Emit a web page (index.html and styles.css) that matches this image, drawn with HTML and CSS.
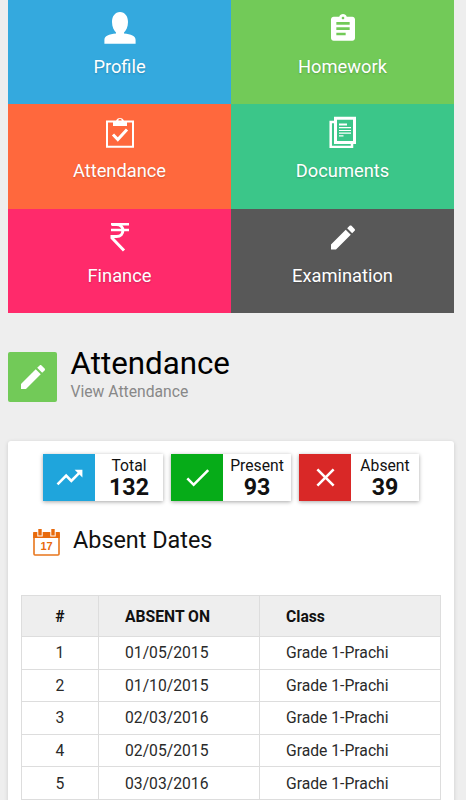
FILE: index.html
```html
<!DOCTYPE html>
<html lang="en">
<head>
  <meta charset="UTF-8">
  <title>Attendance</title>
  <link rel="stylesheet" href="styles.css">
</head>
<body>
<div class="menu">
  <div class="tile profile">
    <svg width="32" height="32" viewBox="0 0 32 32" fill="#fff"><path d="M16 0C11 0 8 4.400 8 10c0 5 2 8.500 4 10.500v1C5 22 .4 24 .4 28v3.700h31.200V28c0-4-4.600-6-11.600-6.500v-1c2-2 4-5.500 4-10.500 0-5.600-3-10-8-10z"/></svg>
    <div>Profile</div>
  </div>
  <div class="tile homework">
    <svg width="32" height="32" viewBox="0 0 24 24" fill="#fff"><path d="M19 3.500h-4.180C14.400 2.340 13.300 1.500 12 1.500s-2.400.84-2.820 2H5c-1.100 0-2 .9-2 2v14c0 1.100.9 2 2 2h14c1.100 0 2-.9 2-2v-14c0-1.100-.9-2-2-2zm-7 0c.55 0 1 .45 1 1s-.45 1-1 1-1-.45-1-1 .45-1 1-1zm2 14H7v-2h7v2zm3-4H7v-2h10v2zm0-4H7v-2h10v2z"/></svg>
    <div>Homework</div>
  </div>
  <div class="tile attendance">
    <svg width="32" height="32" viewBox="0 0 32 32" fill="none" stroke="#fff"><path stroke-width="2" d="M3 5.500h26v25.300H3z"/><path fill="#fff" stroke="none" fill-rule="evenodd" d="M9 10V5h3a4.200 4.200 0 0 1 8 0h3v5zM16 2.800a1.700 1.700 0 1 0 0 3.400 1.700 1.700 0 0 0 0-3.400z"/><path stroke-width="3" d="M9 18.500l4.800 5 9.200-10"/></svg>
    <div>Attendance</div>
  </div>
  <div class="tile documents">
    <svg width="32" height="32" viewBox="0 0 32 32" fill="none" stroke="#fff"><path stroke-width="3" d="M8.500 2.200h19v24.300h-19z"/><path stroke-width="2.500" d="M7 6H3.700v25H25v-4"/><path stroke-width="2" d="M12 8.500h8"/><path stroke-width="1.200" d="M12 11.700h12M12 14.500h12M12 17.200h12M12 19.900h4.500"/></svg>
    <div>Documents</div>
  </div>
  <div class="tile finance">
    <svg width="32" height="32" viewBox="0 0 32 32" fill="none" stroke="#fff"><path stroke-width="2.400" d="M7 3.200h18M7 9h18"/><path stroke-width="3" d="M8 3.500h4.500c8.500 0 8.500 12 0 12H8v1.500l12 12.500"/></svg>
    <div>Finance</div>
  </div>
  <div class="tile examination">
    <svg width="32" height="32" viewBox="0 0 24 24" fill="#fff"><path d="M3 17.600v3.750h3.750L17.810 10.290l-3.750-3.750L3 17.600zM20.710 7.390c.39-.39.39-1.020 0-1.410l-2.340-2.340c-.39-.39-1.020-.39-1.410 0l-1.830 1.830 3.750 3.750 1.830-1.830z"/></svg>
    <div>Examination</div>
  </div>
</div>

<div class="heading">
  <div class="badge">
    <svg width="32" height="32" viewBox="0 0 24 24" fill="#fff"><path d="M3 17.250V21h3.750L17.810 9.940l-3.750-3.750L3 17.250zM20.710 7.040c.39-.39.39-1.020 0-1.410l-2.340-2.340c-.39-.39-1.020-.39-1.410 0l-1.830 1.830 3.750 3.750 1.830-1.830z"/></svg>
  </div>
  <div>
    <h1>Attendance</h1>
    <p>View Attendance</p>
  </div>
</div>

<div class="panel">
  <div class="stats">
    <div class="stat">
      <div class="icon total"><svg width="31" height="31" viewBox="0 0 24 24" fill="#fff"><path d="M16 6l2.290 2.290-4.880 4.880-4-4L2 16.590 3.410 18l6-6 4 4 6.300-6.290L22 12V6z"/></svg></div>
      <div class="count">Total<b>132</b></div>
    </div>
    <div class="stat">
      <div class="icon present"><svg width="31" height="31" viewBox="0 0 24 24" fill="#fff"><path d="M9 16.170L4.830 12l-1.420 1.410L9 19 21 7l-1.410-1.410z"/></svg></div>
      <div class="count">Present<b>93</b></div>
    </div>
    <div class="stat">
      <div class="icon absent"><svg width="31" height="31" viewBox="0 0 24 24" fill="#fff"><path d="M19 6.410L17.590 5 12 10.590 6.410 5 5 6.410 10.590 12 5 17.590 6.410 19 12 13.410 17.590 19 19 17.590 13.410 12z"/></svg></div>
      <div class="count">Absent<b>39</b></div>
    </div>
  </div>

  <div class="subheading">
    <svg class="calendar" width="27" height="27" viewBox="0 0 27 27">
      <rect x="1" y="4" width="25" height="22" rx="1" fill="#fff" stroke="#e8761c" stroke-width="1.600"/>
      <path fill="#e86a0c" d="M.2 3h26.600v6H.2z"/>
      <path stroke="#fff" stroke-width="5.400" d="M7 0v7.500M20 0v7.500"/>
      <path stroke="#e86a0c" stroke-width="3.400" d="M7 0v6.500M20 0v6.500"/>
      <text x="13.500" y="21.300" text-anchor="middle">17</text>
    </svg>
    <h2>Absent Dates</h2>
  </div>

  <table>
    <tr><th>#</th><th>ABSENT ON</th><th>Class</th></tr>
    <tr><td>1</td><td>01/05/2015</td><td>Grade 1-Prachi</td></tr>
    <tr><td>2</td><td>01/10/2015</td><td>Grade 1-Prachi</td></tr>
    <tr><td>3</td><td>02/03/2016</td><td>Grade 1-Prachi</td></tr>
    <tr><td>4</td><td>02/05/2015</td><td>Grade 1-Prachi</td></tr>
    <tr><td>5</td><td>03/03/2016</td><td>Grade 1-Prachi</td></tr>
  </table>
</div>
</body>
</html>
```
FILE: styles.css
```css
body {
  height: 800px;
  margin: 0;
  padding: 0 12px 0 8px;
  box-sizing: border-box;
  overflow: hidden;
  background-color: #eee;
  color: #111;
  font-family: Roboto, sans-serif;
  font-size: 15.7px;
}

svg {
  display: block;
}

.menu {
  display: grid;
  grid-template-columns: 223px 223px;
  grid-template-rows: 104px 105px 104px;
}

.tile {
  display: flex;
  flex-direction: column;
  align-items: center;
  gap: 12px;
  padding-top: 12px;
  color: #fff;
  font-size: 18.3px;
  line-height: 22px;
  text-shadow: 0 1px 2px rgba(0, 0, 0, 0.2);
}

.profile {
  background-color: #34a9de;
}

.homework {
  background-color: #72ca58;
}

.attendance {
  background-color: #ff683d;
}

.documents {
  background-color: #3bc689;
}

.finance {
  background-color: #ff2a6b;
}

.examination {
  background-color: #585858;
}

.heading {
  display: flex;
  gap: 13.5px;
  margin-top: 32px;
  height: 96px;
}

.badge {
  display: flex;
  align-items: center;
  justify-content: center;
  width: 49px;
  height: 50px;
  margin-top: 7px;
  border-radius: 2px;
  background-color: #72ca58;
}

h1, h2, p {
  margin: 0;
  font-weight: normal;
}

h1 {
  color: #000;
  font-size: 31.3px;
  line-height: 38px;
}

p {
  color: #888;
  line-height: 18px;
}

.panel {
  height: 380px;
  padding: 13px 13px 0;
  border-radius: 3px;
  background-color: #fff;
  box-shadow: 0 1px 4px rgba(0, 0, 0, 0.15);
}

.stats {
  display: flex;
  gap: 8px;
  padding-left: 22px;
}

.stat {
  display: flex;
  width: 120px;
  height: 47px;
  box-shadow: 0 1px 4px rgba(0, 0, 0, 0.35);
}

.icon {
  display: flex;
  align-items: center;
  justify-content: center;
  width: 52px;
}

.total {
  background-color: #1fa5dc;
}

.present {
  background-color: #06ac18;
}

.absent {
  background-color: #d92827;
}

.count {
  flex: 1;
  padding-top: 2px;
  text-align: center;
  line-height: 20px;
}

.count b {
  display: block;
  font-size: 23.2px;
  line-height: 22.5px;
}

.subheading {
  display: flex;
  align-items: center;
  gap: 13px;
  height: 30px;
  margin: 24px 0 40px;
  padding-left: 12px;
}

.calendar {
  margin-top: 4px;
  overflow: visible;
}

.calendar text {
  fill: #e86a0c;
  font-family: "Liberation Sans", sans-serif;
  font-size: 11px;
  font-weight: bold;
}

h2 {
  font-size: 23.4px;
}

table {
  width: 420px;
  border-collapse: collapse;
  table-layout: fixed;
}

th, td {
  height: 32.6px;
  padding: 0 0 0 26px;
  box-sizing: border-box;
  border: 1px solid #ddd;
  text-align: left;
}

td {
  color: #2a2a2a;
}

th {
  height: 41px;
  background-color: #eee;
}

th:first-child, td:first-child {
  width: 77px;
  padding: 0;
  text-align: center;
}

th:nth-child(2) {
  width: 161px;
}
```
